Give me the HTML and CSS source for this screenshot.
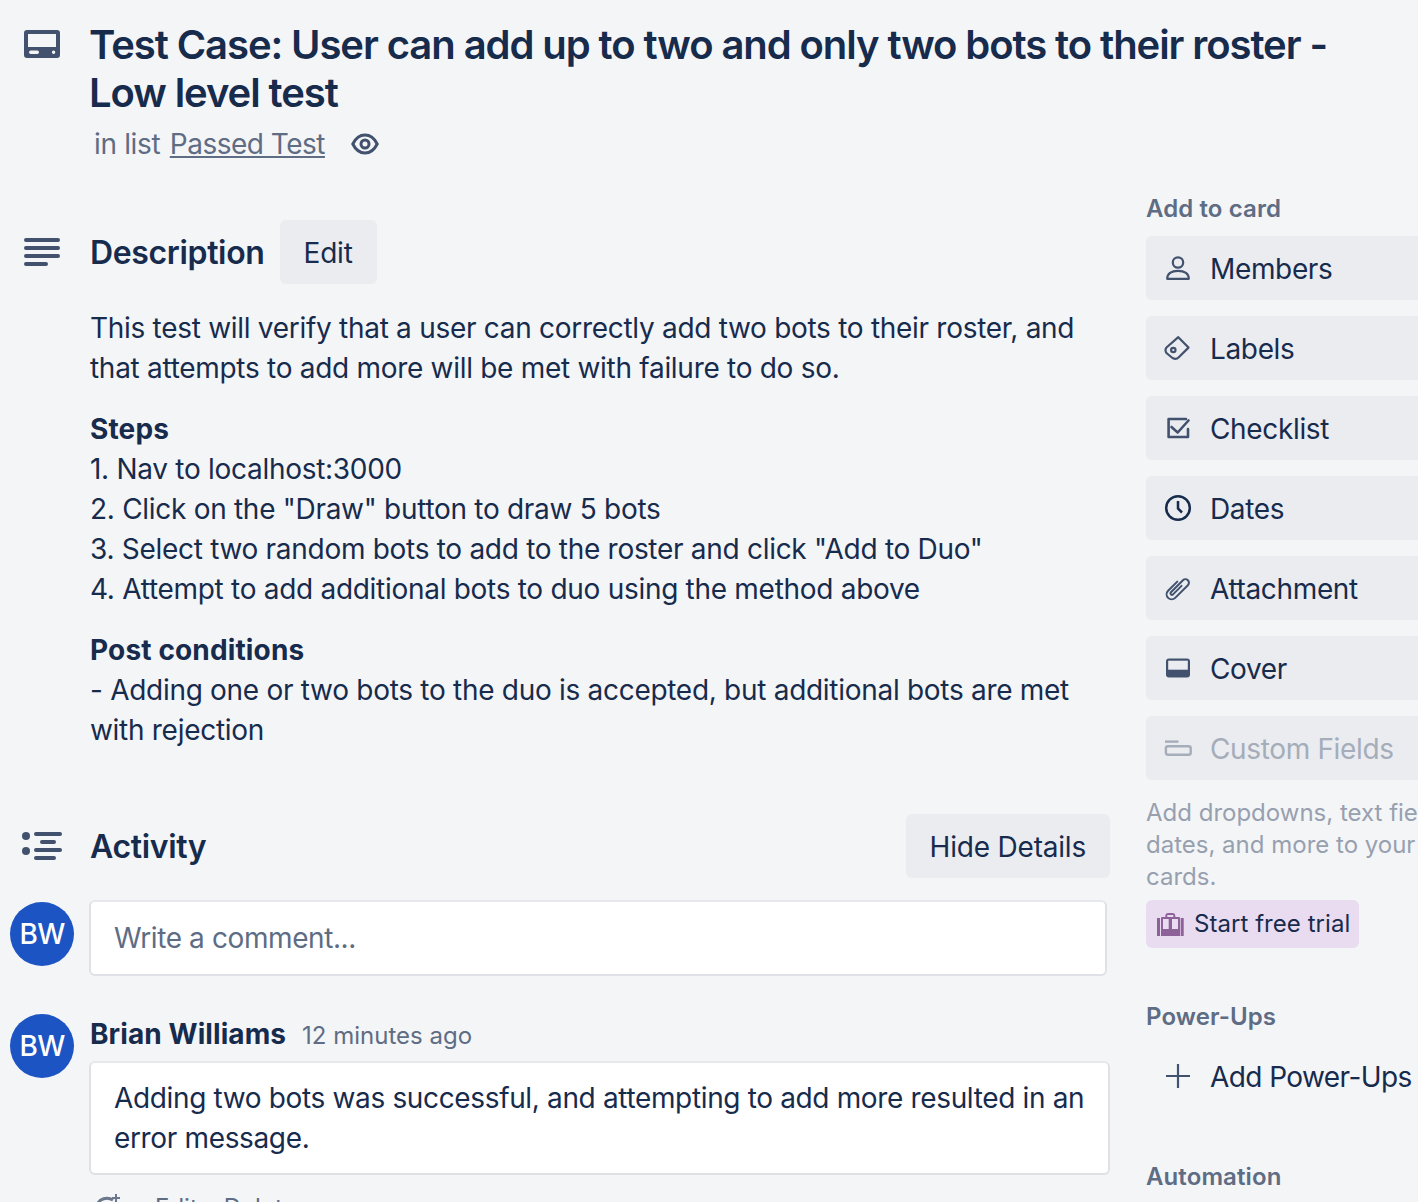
FILE: index.html
```html
<!DOCTYPE html>
<html lang="en">
<head>
    <meta charset="UTF-8">
    <title>Test Case: User can add up to two and only two bots to their roster</title>
    <link rel="stylesheet" href="styles.css">
</head>
<body>
    <div class="card">
        <header class="card-header">
            <svg class="gutter-icon header-icon" viewBox="0 0 36 28"><path fill="#42526e" fill-rule="evenodd" d="M3 0h30a3 3 0 0 1 3 3v22a3 3 0 0 1-3 3H3a3 3 0 0 1-3-3V3a3 3 0 0 1 3-3Zm1 4v13h28V4H4Zm2.700 16.600a1.700 1.700 0 0 0 0 3.400h6.600a1.700 1.700 0 0 0 0-3.400H6.700Zm22.900 0a1.700 1.700 0 1 0 0 3.400 1.700 1.700 0 0 0 0-3.400Z"/></svg>
            <div class="header-text">
                <h1>Test Case: User can add up to two and only two bots to their roster - Low level test</h1>
                <p class="list-line">in list <a href="#">Passed Test</a>
                    <svg class="eye" viewBox="0 0 28 24"><path fill="none" stroke="#42526e" stroke-width="3" d="M1.800 12C5 5.500 9 3 14 3s9 2.500 12.200 9C23 18.500 19 21 14 21S5 18.500 1.800 12Z"/><circle cx="14" cy="12" r="4" fill="none" stroke="#42526e" stroke-width="3"/></svg>
                </p>
            </div>
        </header>

        <div class="columns">
            <main class="main-col">
                <section class="description">
                    <div class="section-head">
                        <svg class="gutter-icon" viewBox="0 0 36 28"><g fill="#42526e"><rect y="0" width="36" height="4" rx="2"/><rect y="8" width="36" height="4" rx="2"/><rect y="16" width="36" height="4" rx="2"/><rect y="24" width="24" height="4" rx="2"/></g></svg>
                        <h2>Description</h2>
                        <button class="btn">Edit</button>
                    </div>
                    <div class="desc-body">
                        <p>This test will verify that a user can correctly add two bots to their roster, and that attempts to add more will be met with failure to do so.</p>
                        <p><strong>Steps</strong><br>1. Nav to localhost:3000<br>2. Click on the "Draw" button to draw 5 bots<br>3. Select two random bots to add to the roster and click "Add to Duo"<br>4. Attempt to add additional bots to duo using the method above</p>
                        <p><strong>Post conditions</strong><br>- Adding one or two bots to the duo is accepted, but additional bots are met with rejection</p>
                    </div>
                </section>

                <section class="activity">
                    <div class="section-head">
                        <svg class="gutter-icon activity-icon" viewBox="0 0 40 28"><g fill="#42526e"><circle cx="4" cy="4" r="4"/><circle cx="4" cy="19" r="4"/><rect x="12" y="0" width="28" height="4" rx="2"/><rect x="18" y="8" width="16" height="4" rx="2"/><rect x="12" y="16" width="28" height="4" rx="2"/><rect x="12" y="24" width="22" height="4" rx="2"/></g></svg>
                        <h2>Activity</h2>
                        <button class="btn hide-details">Hide Details</button>
                    </div>
                    <div class="comment-row new-comment">
                        <div class="avatar">BW</div>
                        <div class="comment-box placeholder">Write a comment...</div>
                    </div>
                    <div class="comment-row posted">
                        <div class="avatar">BW</div>
                        <div class="comment-main">
                            <div class="comment-meta"><strong>Brian Williams</strong><span>12 minutes ago</span></div>
                            <div class="comment-box">Adding two bots was successful, and attempting to add more resulted in an error message.</div>
                            <div class="comment-actions">
                                <svg viewBox="0 0 36 28"><path fill="none" stroke="#6b778c" stroke-width="3" d="M18 6a11 11 0 1 0 5 9"/><path fill="#6b778c" d="M20 0h2v3h3v2h-3v3h-2V5h-3V3h3Z"/></svg>
                                <span>Edit</span><span>Delete</span>
                            </div>
                        </div>
                    </div>
                </section>
            </main>

            <aside class="sidebar">
                <h3>Add to card</h3>
                <button class="side-btn">
                    <svg viewBox="0 0 24 24"><g fill="none" stroke="#42526e" stroke-width="2.200" stroke-linejoin="round"><circle cx="12" cy="6.500" r="5.200"/><path d="M1.200 22.800c0-5 4-8 10.800-8s10.800 3 10.800 8Z"/></g></svg>
                    Members
                </button>
                <button class="side-btn">
                    <svg viewBox="0 0 24 24"><g fill="none" stroke="#42526e" stroke-width="2.200" stroke-linejoin="round"><path d="M12.300 1.200 22.500 11.600 12.500 21.500c-1.500 1.500-4 1.500-6 .5L1 17.500c-1.800-1.500-2-4.500-.5-6Z"/><circle cx="7.300" cy="14" r="2.200"/></g></svg>
                    Labels
                </button>
                <button class="side-btn">
                    <svg viewBox="0 0 24 24"><g fill="none" stroke="#42526e" stroke-width="2.600" stroke-linejoin="round" stroke-linecap="round"><path d="M20 3H2.600v18H22v-8"/><path d="m5.500 11 6.200 5.500L22.500 4.500"/></g></svg>
                    Checklist
                </button>
                <button class="side-btn">
                    <svg viewBox="0 0 24 24"><g fill="none" stroke="#172b4d" stroke-width="2.500"><circle cx="12" cy="12" r="11.800"/><path d="M12 5v7.500l4 4"/></g></svg>
                    Dates
                </button>
                <button class="side-btn">
                    <svg viewBox="0 0 24 24"><path fill="none" stroke="#42526e" stroke-width="2" stroke-linecap="round" transform="rotate(45 12 12)" d="M7 8V21a5 5 0 0 0 10 0V3a3.500 3.500 0 0 0-7 0V20a1.500 1.500 0 0 0 3 0V8"/></svg>
                    Attachment
                </button>
                <button class="side-btn">
                    <svg viewBox="0 -2.500 24 24"><path fill="#42526e" d="M3 0h18a3 3 0 0 1 3 3v13a3 3 0 0 1-3 3H3a3 3 0 0 1-3-3V3a3 3 0 0 1 3-3Z"/><rect x="2.200" y="2.200" width="19.600" height="9" fill="#eaecf0"/></svg>
                    Cover
                </button>
                <button class="side-btn disabled">
                    <svg viewBox="0 0 24 24"><g fill="none" stroke="#a5adba" stroke-width="2.400"><path d="M-1 5.600H12.500"/><rect x="-.1" y="10.200" width="24.800" height="8.600" rx="2"/></g></svg>
                    Custom Fields
                </button>
                <p class="promo-text">Add dropdowns, text fields, dates, and more to your cards.</p>
                <button class="trial-btn">
                    <svg viewBox="0 0 27 23"><g fill="#8c6299"><path d="M0 5h3v18H0ZM23.700 5h3v18h-3Z"/><path fill-rule="evenodd" d="M8.300 3a3 3 0 0 1 3-3h4a3 3 0 0 1 3 3v1H22a1 1 0 0 1 1 1v18H4V5a1 1 0 0 1 1-1h3.300Zm2 1h6V2h-6ZM6 6v10h5.700V6Zm9 0v10h6V6Z"/></g></svg>
                    Start free trial
                </button>
                <h3 class="powerups-title">Power-Ups</h3>
                <button class="side-btn plain">
                    <svg viewBox="0 0 24 24"><path fill="none" stroke="#42526e" stroke-width="2.200" d="M12 0v24M0 12h24"/></svg>
                    Add Power-Ups
                </button>
                <h3 class="automation-title">Automation</h3>
            </aside>
        </div>
    </div>
</body>
</html>
```

FILE: styles.css
```css
html, body {
    margin: 0;
    padding: 0;
    height: 1202px;
    overflow: hidden;
    background-color: #f4f5f7;
}
body {
    font-family: Inter, "Noto Sans", sans-serif;
    font-size: 28px;
    line-height: 40px;
    letter-spacing: -0.35px;
    color: #172b4d;
}
.card {
    padding: 21px 0 0 24px;
}
.card-header {
    display: flex;
}
.gutter-icon {
    flex: none;
    width: 36px;
    height: 28px;
    margin-right: 30px;
}
.header-icon {
    margin-top: 9px;
}
.header-text {
    width: 1250px;
}
h1 {
    margin: 0 0 0 -1px;
    font-size: 40px;
    line-height: 48px;
    font-weight: 600;
    letter-spacing: -1.08px;
}
.list-line {
    display: flex;
    align-items: center;
    margin: 7px 0 0 4px;
    color: #5e6c84;
    white-space: pre;
}
.list-line a {
    margin-left: 2px;
    letter-spacing: -0.5px;
    color: #5e6c84;
}
.eye {
    width: 28px;
    height: 24px;
    margin-left: 26px;
}
.columns {
    display: flex;
    margin-top: 28px;
}
.main-col {
    width: 1086px;
    flex: none;
    padding-top: 28px;
}
.section-head {
    display: flex;
    align-items: center;
    height: 64px;
}
h2 {
    margin: 2px 0 0;
    font-size: 32px;
    line-height: 40px;
    font-weight: 600;
}
.btn {
    height: 64px;
    padding: 2px 24px 0;
    margin-left: 15px;
    border: none;
    border-radius: 6px;
    background-color: #eaecf0;
    color: #172b4d;
    font: inherit;
    letter-spacing: -0.2px;
}
.desc-body {
    width: 1020px;
    margin: 24px 0 0 66px;
    letter-spacing: -0.29px;
}
.desc-body p {
    margin: 0 0 21px;
}
.desc-body strong {
    font-weight: 700;
    letter-spacing: 0.15px;
}
.activity {
    margin-top: 64px;
}
.activity-icon {
    width: 40px;
    margin: 0 28px 0 -2px;
}
.hide-details {
    margin-left: auto;
}
.comment-row {
    display: flex;
    margin-left: -14px;
}
.avatar {
    flex: none;
    width: 64px;
    height: 64px;
    margin-right: 15px;
    border-radius: 50%;
    background-color: #1c54c4;
    color: #fff;
    font-size: 28px;
    line-height: 64px;
    font-weight: 500;
    letter-spacing: -0.8px;
    text-align: center;
}
.comment-box {
    box-sizing: border-box;
    padding: 15px 20px 15px 23px;
    border: 2px solid #dfe1e6;
    border-top-color: #e6e8ec;
    border-radius: 6px;
    background-color: #fff;
}
.new-comment {
    margin-top: 24px;
}
.new-comment .comment-box {
    width: 1018px;
    height: 76px;
    margin-top: -2px;
    padding-top: 16px;
}
.placeholder {
    letter-spacing: -0.4px;
    color: #5e6c84;
}
.posted {
    margin-top: 38px;
}
.comment-main {
    width: 1022px;
}
.comment-meta {
    display: flex;
    align-items: baseline;
    height: 47px;
    padding-left: 1px;
}
.comment-meta strong {
    font-weight: 700;
    letter-spacing: 0.08px;
}
.comment-meta span {
    margin-left: 16px;
    font-size: 24px;
    letter-spacing: 0;
    color: #5e6c84;
}
.comment-actions {
    display: flex;
    align-items: center;
    gap: 26px;
    margin-top: 13px;
    padding-left: 6px;
    font-size: 24px;
    letter-spacing: 0;
    color: #5e6c84;
}
.comment-actions svg {
    width: 36px;
    height: 28px;
    margin-right: -2px;
}
.comment-actions span {
    text-decoration: underline;
}
.sidebar {
    width: 336px;
    flex: none;
    margin-left: 36px;
    padding-top: 1px;
}
h3 {
    margin: 0 0 11px;
    font-size: 24px;
    line-height: 32px;
    font-weight: 600;
    letter-spacing: 0.1px;
    color: #5e6c84;
}
.side-btn {
    display: flex;
    align-items: center;
    box-sizing: border-box;
    width: 336px;
    height: 64px;
    margin-bottom: 16px;
    padding: 1px 16px 0 0;
    border: none;
    border-radius: 6px;
    background-color: #eaecf0;
    color: #172b4d;
    font: inherit;
    letter-spacing: inherit;
    text-align: left;
    white-space: nowrap;
}
.side-btn svg {
    flex: none;
    width: 24px;
    height: 24px;
    margin: -1px 20px 0;
    overflow: visible;
}
.disabled {
    color: #a5adba;
}
.plain {
    background: none;
    margin-bottom: 0;
    letter-spacing: -0.58px;
}
.promo-text {
    margin: 0;
    padding-top: 1px;
    font-size: 24px;
    line-height: 32px;
    letter-spacing: 0;
    color: #97a0af;
}
.trial-btn {
    display: flex;
    align-items: center;
    gap: 10px;
    height: 48px;
    margin-top: 7px;
    padding: 0 9px 0 11px;
    border: none;
    border-radius: 6px;
    background-color: #eadcf0;
    color: #172b4d;
    font: inherit;
    font-size: 24px;
    letter-spacing: 0.05px;
}
.trial-btn svg {
    width: 27px;
    height: 23px;
}
.powerups-title {
    margin-top: 53px;
    margin-bottom: 11px;
}
.automation-title {
    margin-top: 53px;
}
```
